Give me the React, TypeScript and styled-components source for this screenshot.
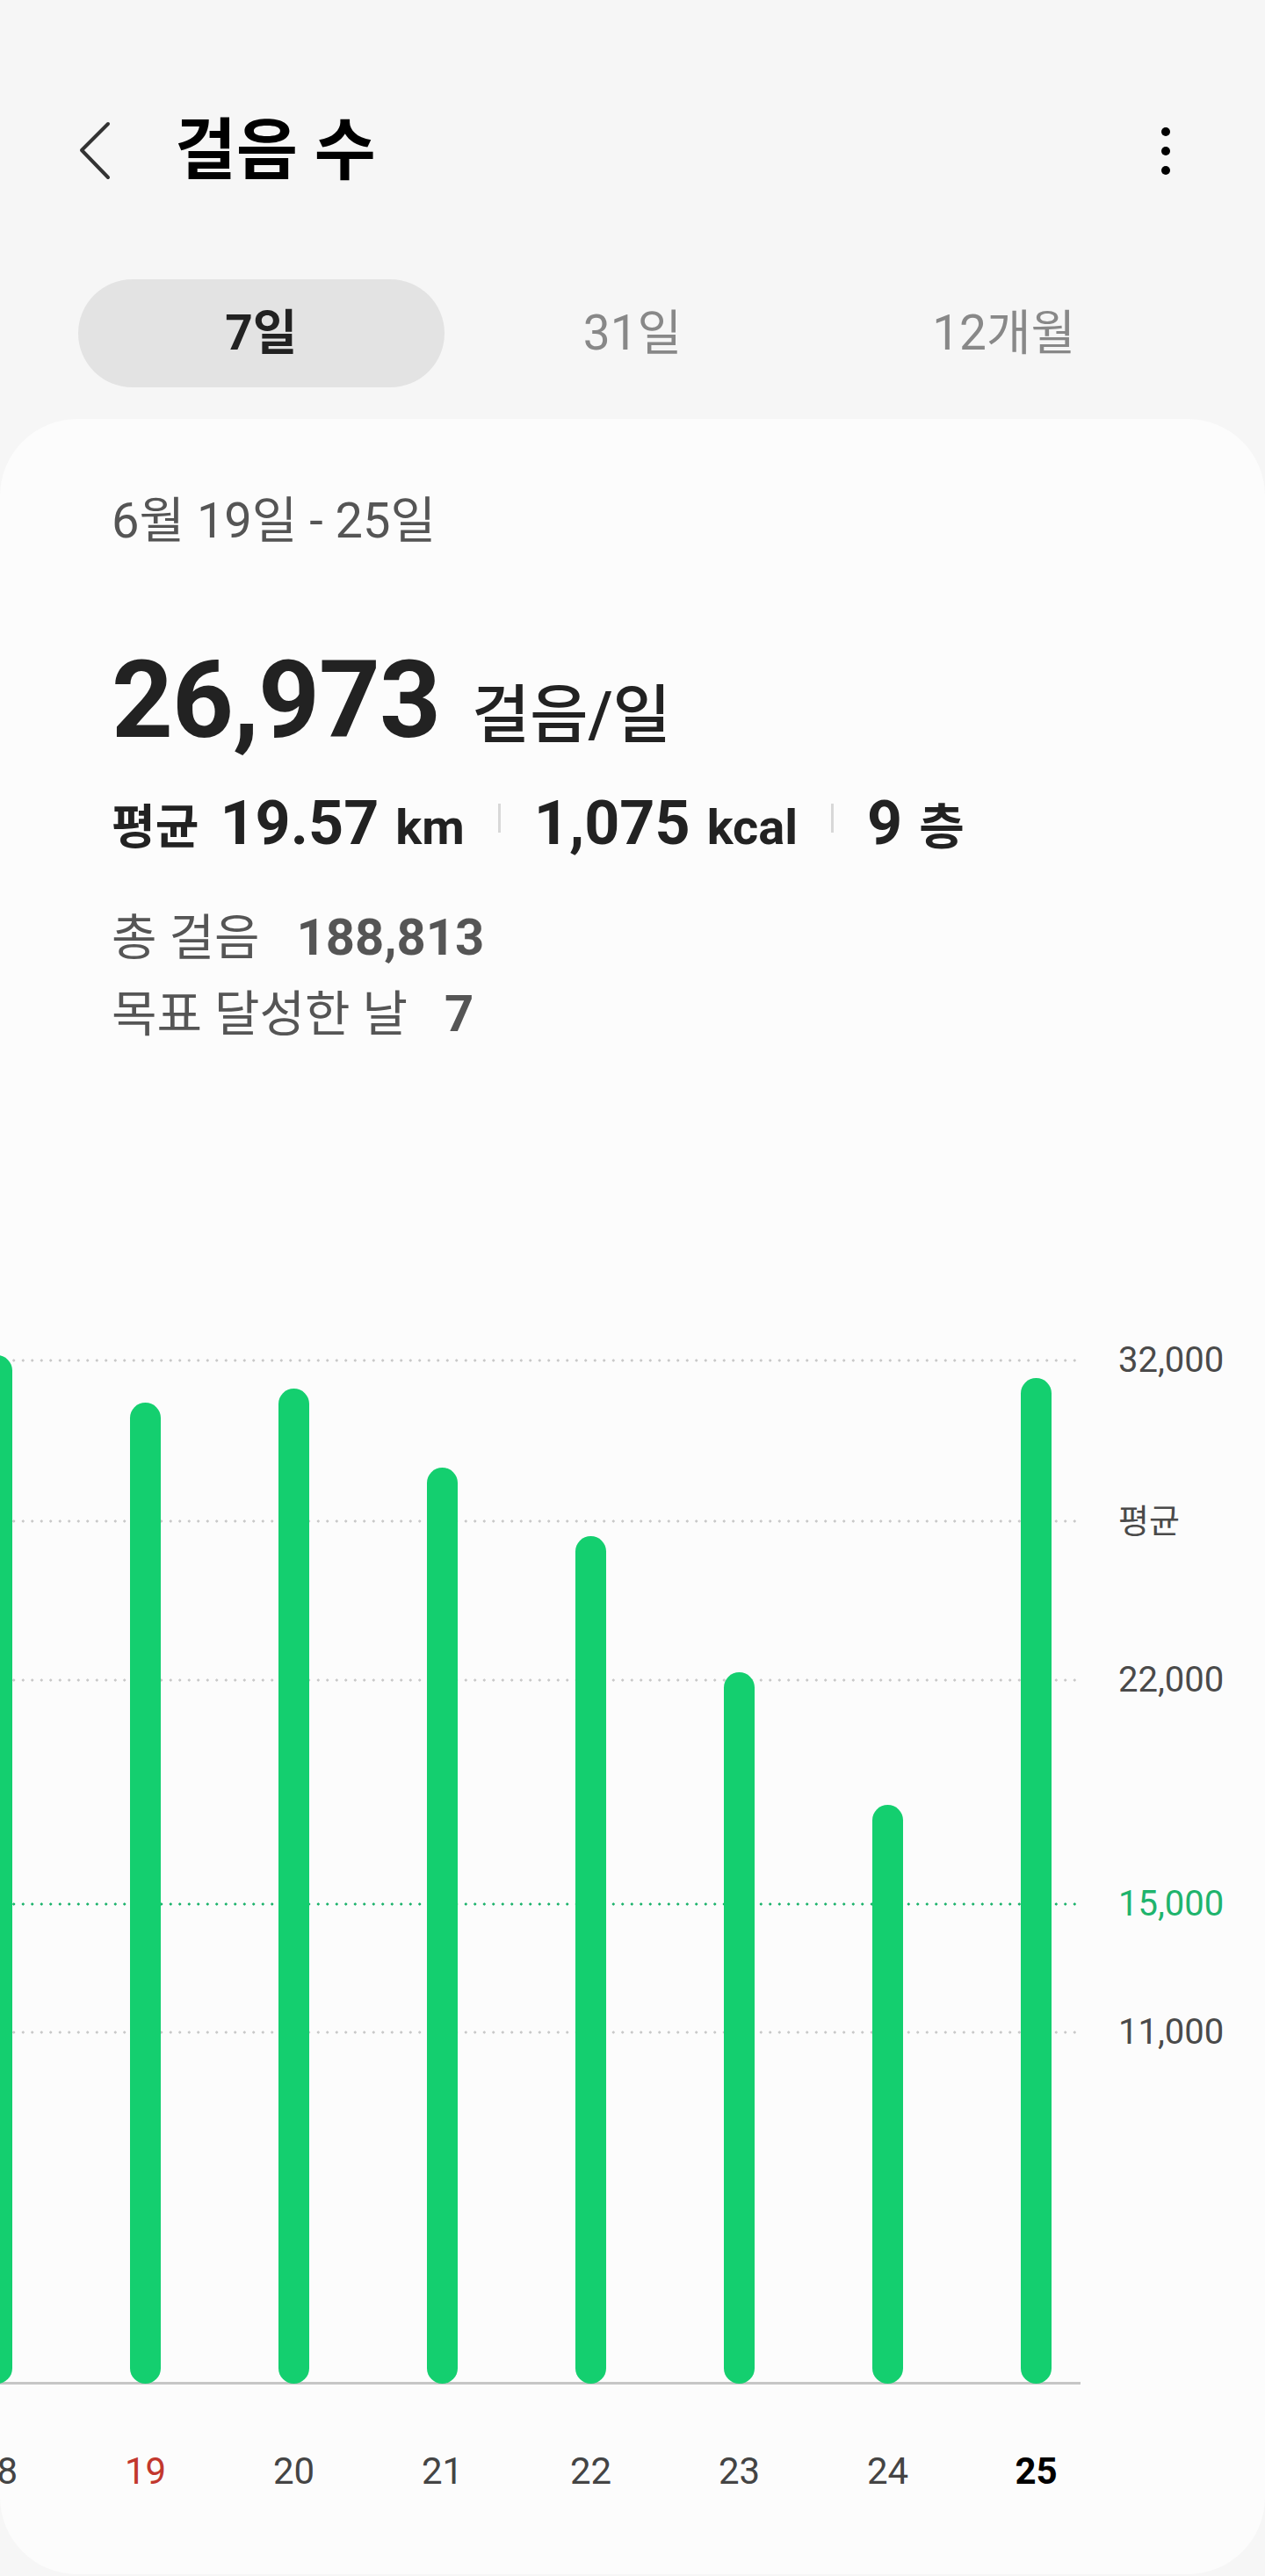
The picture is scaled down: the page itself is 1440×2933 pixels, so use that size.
import styled, { createGlobalStyle } from 'styled-components';

const GlobalStyle = createGlobalStyle`
  html, body {
    margin: 0;
    padding: 0;
    background: #f6f6f6;
  }
  body {
    font-family: Roboto, "Noto Sans CJK KR", sans-serif;
    -webkit-font-smoothing: antialiased;
  }
`;

// chart scale: px per step, measured from the gridlines
const PX_PER_STEP = 0.0364;
const PLOT_HEIGHT = 1214;
const ZERO_Y = 1213;

type Tone = 'normal' | 'sunday' | 'today';

const days: { day: number; steps: number; tone: Tone }[] = [
  { day: 18, steps: 32170, tone: 'normal' },
  { day: 19, steps: 30700, tone: 'sunday' },
  { day: 20, steps: 31120, tone: 'normal' },
  { day: 21, steps: 28650, tone: 'normal' },
  { day: 22, steps: 26520, tone: 'normal' },
  { day: 23, steps: 22260, tone: 'normal' },
  { day: 24, steps: 18110, tone: 'normal' },
  { day: 25, steps: 31453, tone: 'today' },
];

const gridLines = [
  { value: 32000, label: '32,000', goal: false },
  { value: 26973, label: '평균', goal: false },
  { value: 22000, label: '22,000', goal: false },
  { value: 15000, label: '15,000', goal: true },
  { value: 11000, label: '11,000', goal: false },
];

const Page = styled.div`
  display: flex;
  flex-direction: column;
  min-height: 2933px;
`;

const Header = styled.header`
  display: flex;
  align-items: center;
  height: 100px;
  margin-top: 122px;
  padding: 0 108px 0 88px;
`;

const BackButton = styled.button`
  display: flex;
  padding: 0;
  border: 0;
  background: none;
  width: 40px;
  height: 70px;
`;

const Title = styled.h1`
  margin: 0 0 0 71px;
  font-size: 76px;
  line-height: 1;
  font-weight: 700;
  color: #000;
  flex: 1;
`;

const MenuButton = styled.button`
  display: flex;
  flex-direction: column;
  align-items: center;
  gap: 12px;
  padding: 0;
  border: 0;
  background: none;
`;

const Dot = styled.span`
  width: 10px;
  height: 10px;
  border-radius: 50%;
  background: #000;
`;

const Tabs = styled.nav`
  display: grid;
  grid-template-columns: repeat(3, 1fr);
  margin-top: 96px;
  padding: 0 86px;
`;

const Tab = styled.div<{ $active?: boolean }>`
  display: flex;
  align-items: center;
  justify-content: center;
  height: 123px;
  margin: 0 3px;
  border-radius: 62px;
  font-size: 55px;
  line-height: 1;
  font-weight: ${({ $active }) => ($active ? 700 : 400)};
  color: ${({ $active }) => ($active ? '#222' : '#888')};
  background: ${({ $active }) => ($active ? '#e3e3e3' : 'transparent')};
`;

const Card = styled.section`
  margin-top: 36px;
  background: #fcfcfc;
  border-radius: 88px;
  padding: 88px 0 96px;
  overflow: hidden;
`;

const Summary = styled.div`
  padding: 0 127px;
`;

const DateRange = styled.div`
  font-size: 56px;
  line-height: 1;
  color: #555;
`;

const Headline = styled.div`
  display: flex;
  align-items: baseline;
  margin-top: 116px;
  color: #222;
`;

const BigNumber = styled.span`
  font-size: 122px;
  line-height: 1;
  font-weight: 700;
  letter-spacing: -1px;
`;

const BigUnit = styled.span`
  margin-left: 36px;
  font-size: 72px;
  line-height: 1;
  font-weight: 500;
`;

const Stats = styled.div`
  display: flex;
  align-items: baseline;
  margin-top: 43px;
  color: #222;
  white-space: nowrap;
`;

const StatLabel = styled.span`
  font-size: 54px;
  line-height: 1;
  font-weight: 700;
  margin-right: 24px;
`;

const StatValue = styled.span`
  font-size: 70px;
  line-height: 1;
  font-weight: 700;
`;

const StatUnit = styled.span`
  margin-left: 19px;
  font-size: 56px;
  line-height: 1;
  font-weight: 700;
`;

const Divider = styled.span`
  align-self: flex-end;
  width: 3px;
  height: 33px;
  margin: 0 38px 24px 38px;
  background: #d8d8d8;
`;

const Totals = styled.div`
  display: flex;
  flex-direction: column;
  gap: 29px;
  margin-top: 66px;
`;

const TotalRow = styled.div`
  display: flex;
  align-items: baseline;
  font-size: 56px;
  line-height: 1;
  color: #555;
`;

const TotalValue = styled.span`
  margin-left: 42px;
  font-size: 58px;
  font-weight: 700;
`;

const Chart = styled.div`
  display: grid;
  grid-template-columns: 1230px 1fr;
  margin-top: 318px;
`;

const Plot = styled.div`
  position: relative;
  height: ${PLOT_HEIGHT}px;
  overflow: hidden;
`;

const GridLine = styled.div<{ $goal?: boolean }>`
  position: absolute;
  left: 0;
  right: 0;
  height: 4px;
  background-image: radial-gradient(
    circle,
    ${({ $goal }) => ($goal ? '#1fb46d' : '#c9c9c9')} 1.4px,
    transparent 1.8px
  );
  background-size: 10.5px 4px;
  background-repeat: repeat-x;
`;

const Baseline = styled.div`
  position: absolute;
  left: 0;
  right: 0;
  bottom: 0;
  height: 3px;
  background: #c6c6c6;
`;

const Bars = styled.div`
  position: relative;
  display: flex;
  align-items: flex-end;
  height: 100%;
  margin-left: -88px;
  padding-bottom: 1px;
  box-sizing: border-box;
`;

const Slot = styled.div`
  display: flex;
  justify-content: center;
  flex: 0 0 169px;
`;

const Bar = styled.div`
  width: 35px;
  border-radius: 18px;
  background: #14cf6f;
`;

const Axis = styled.div`
  position: relative;
`;

const AxisLabel = styled.span<{ $goal?: boolean; $word?: boolean }>`
  position: absolute;
  left: 43px;
  font-size: ${({ $word }) => ($word ? 38 : 40)}px;
  line-height: 40px;
  color: ${({ $goal }) => ($goal ? '#1fb46d' : '#4a4a4a')};
`;

const DayRow = styled.div`
  display: flex;
  margin-top: 78px;
  margin-left: -88px;
`;

const DayLabel = styled.span<{ $tone: Tone }>`
  flex: 0 0 169px;
  text-align: center;
  font-size: 42px;
  line-height: 1;
  font-weight: ${({ $tone }) => ($tone === 'today' ? 700 : 400)};
  color: ${({ $tone }) =>
    $tone === 'sunday' ? '#c2372d' : $tone === 'today' ? '#000' : '#444'};
`;

const toY = (value: number) => ZERO_Y - value * PX_PER_STEP;

const App = () => {
  return (
    <Page>
      <GlobalStyle />
      <Header>
        <BackButton aria-label="뒤로">
          <svg width="40" height="70" viewBox="0 0 40 70">
            <polyline
              points="35,4 5,34 35,65"
              fill="none"
              stroke="#333"
              strokeWidth="4"
              strokeLinecap="round"
              strokeLinejoin="round"
            />
          </svg>
        </BackButton>
        <Title>걸음 수</Title>
        <MenuButton aria-label="더보기">
          <Dot />
          <Dot />
          <Dot />
        </MenuButton>
      </Header>

      <Tabs>
        <Tab $active>7일</Tab>
        <Tab>31일</Tab>
        <Tab>12개월</Tab>
      </Tabs>

      <Card>
        <Summary>
          <DateRange>6월 19일 - 25일</DateRange>
          <Headline>
            <BigNumber>26,973</BigNumber>
            <BigUnit>걸음/일</BigUnit>
          </Headline>
          <Stats>
            <StatLabel>평균</StatLabel>
            <StatValue>19.57</StatValue>
            <StatUnit>km</StatUnit>
            <Divider />
            <StatValue>1,075</StatValue>
            <StatUnit>kcal</StatUnit>
            <Divider />
            <StatValue>9</StatValue>
            <StatUnit>층</StatUnit>
          </Stats>
          <Totals>
            <TotalRow>
              총 걸음<TotalValue>188,813</TotalValue>
            </TotalRow>
            <TotalRow>
              목표 달성한 날<TotalValue>7</TotalValue>
            </TotalRow>
          </Totals>
        </Summary>

        <Chart>
          <Plot>
            {gridLines.map((g) => (
              <GridLine key={g.label} $goal={g.goal} style={{ top: toY(g.value) - 2 }} />
            ))}
            <Baseline />
            <Bars>
              {days.map((d) => (
                <Slot key={d.day}>
                  <Bar style={{ height: d.steps * PX_PER_STEP }} />
                </Slot>
              ))}
            </Bars>
          </Plot>
          <Axis>
            {gridLines.map((g) => (
              <AxisLabel
                key={g.label}
                $goal={g.goal}
                $word={g.label === '평균'}
                style={{ top: toY(g.value) - 20 }}
              >
                {g.label}
              </AxisLabel>
            ))}
          </Axis>
          <DayRow>
            {days.map((d) => (
              <DayLabel key={d.day} $tone={d.tone}>
                {d.day}
              </DayLabel>
            ))}
          </DayRow>
        </Chart>
      </Card>
    </Page>
  );
};

export default App;
